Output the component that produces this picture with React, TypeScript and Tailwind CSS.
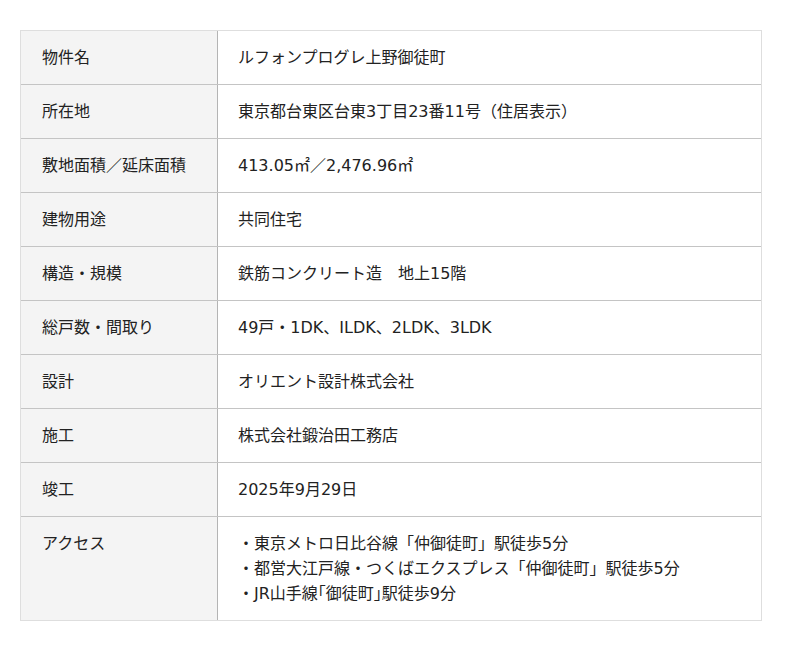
const rows: { label: string; value: string[] }[] = [
  { label: "物件名", value: ["ルフォンプログレ上野御徒町"] },
  { label: "所在地", value: ["東京都台東区台東3丁目23番11号（住居表示）"] },
  { label: "敷地面積／延床面積", value: ["413.05㎡／2,476.96㎡"] },
  { label: "建物用途", value: ["共同住宅"] },
  { label: "構造・規模", value: ["鉄筋コンクリート造　地上15階"] },
  { label: "総戸数・間取り", value: ["49戸・1DK、ILDK、2LDK、3LDK"] },
  { label: "設計", value: ["オリエント設計株式会社"] },
  { label: "施工", value: ["株式会社鍛治田工務店"] },
  { label: "竣工", value: ["2025年9月29日"] },
  {
    label: "アクセス",
    value: [
      "・東京メトロ日比谷線「仲御徒町」駅徒歩5分",
      "・都営大江戸線・つくばエクスプレス「仲御徒町」駅徒歩5分",
      "・JR山手線｢御徒町｣駅徒歩9分",
    ],
  },
];

export default function App() {
  return (
    <div
      className="min-h-screen bg-white px-5 pt-[30px] text-[16px] leading-[25px] text-[#222]"
      style={{ fontFamily: '"DejaVu Sans", "Noto Sans CJK JP", sans-serif' }}
    >
      <div className="w-[742px] border border-[#dedede]">
        {rows.map((row, i) => (
          <div
            key={row.label}
            className={
              i === 0 ? "flex" : "flex border-t border-[#c4c4c4]"
            }
          >
            <div className="w-[197px] shrink-0 border-r border-[#b4b4b4] bg-[#f4f4f4] px-[21px] py-[14px]">
              {row.label}
            </div>
            <div className="flex-1 px-[20px] py-[14px]">
              {row.value.map((line) => (
                <div key={line}>{line}</div>
              ))}
            </div>
          </div>
        ))}
      </div>
    </div>
  );
}
